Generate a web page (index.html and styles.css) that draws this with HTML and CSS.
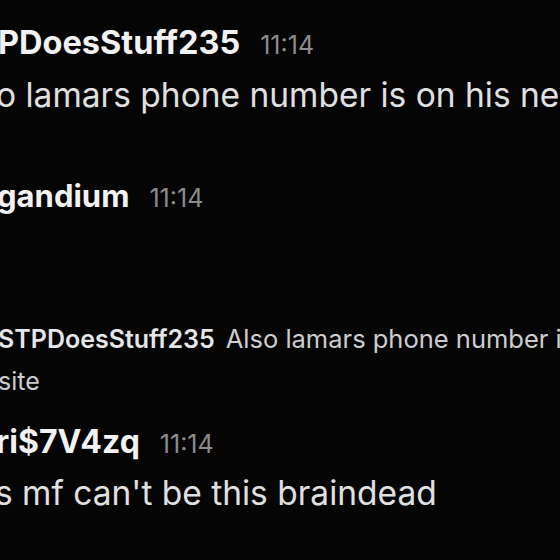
FILE: index.html
```html
<!DOCTYPE html>
<html>
<head>
<meta charset="utf-8">
<link rel="stylesheet" href="styles.css">
</head>
<body>
<main class="chat">
  <article class="msg msg-first">
    <header class="header"><span class="name">PDoesStuff235</span><time class="time">11:14</time></header>
    <p class="text cut-o">o lamars phone number is on his new website</p>
  </article>
  <article class="msg msg-second">
    <header class="header cut-g"><span class="name name-g">gandium</span><time class="time">11:14</time></header>
  </article>
  <article class="msg msg-third">
    <div class="reply">
      <p class="reply-line cut-s1"><span class="reply-name">STPDoesStuff235</span><span class="reply-text">Also lamars phone number is on his new web</span></p>
      <p class="reply-line cut-s2">site</p>
    </div>
    <header class="header cut-r"><span class="name name-r">ri$7V4zq</span><time class="time">11:14</time></header>
    <p class="text cut-s3">s mf can't be this braindead</p>
  </article>
</main>
</body>
</html>
```
FILE: styles.css
```css
html, body {
  margin: 0;
  padding: 0;
  background: #050505;
  overflow: hidden;
}
body {
  width: 560px;
  height: 560px;
  font-family: "Inter", "Noto Sans", sans-serif;
}
.chat {
  padding-top: 19px;
  margin-left: -2px;
  white-space: nowrap;
}
.msg { margin: 0; }
.header {
  display: flex;
  align-items: baseline;
  gap: 20px;
  height: 48px;
  line-height: 48px;
}
.name {
  font-size: 32.5px;
  font-weight: 700;
  color: #f2f2f2;
}
.name-g { font-size: 31px; gap: 18px; }
.name-r { font-size: 32px; }
.time {
  font-size: 25px;
  color: #8c8c8c;
}
.text {
  margin: 4px 0 0;
  font-size: 33.5px;
  line-height: 48px;
  color: #e0e0e0;
}
.msg-second { margin-top: 53px; }
.msg-third { margin-top: 98px; }
.reply-line {
  margin: 0;
  font-size: 25px;
  line-height: 42px;
  color: #cdcdcd;
}
.reply-name {
  font-weight: 600;
  color: #e6e6e6;
  margin-right: 11px;
}
.reply-text { font-size: 25.5px; }
.msg-third .header { margin-top: 16px; }
.msg-third .text { margin-top: 3px; }

.cut-o { margin-left: -2px; }
.cut-g { margin-left: -1px; }
.cut-s1 { margin-left: 0; }
.cut-s2 { margin-left: 0; }
.cut-r { margin-left: -2px; }
.cut-s3 { margin-left: -3px; }
```
